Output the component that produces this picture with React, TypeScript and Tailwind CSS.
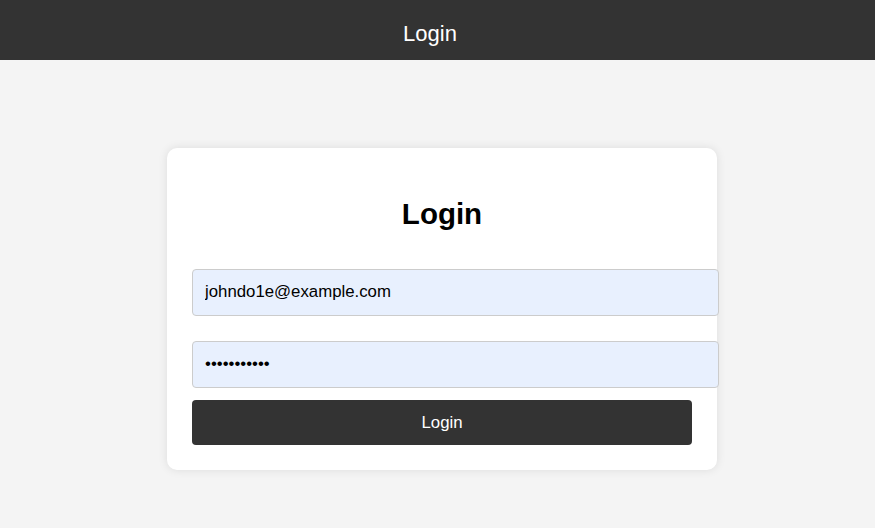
export default function App() {
  return (
    <div className="min-h-[528px] bg-[#f4f4f4] font-['Liberation_Sans',Arial,sans-serif]">
      <header className="flex h-[60px] items-center justify-center bg-[#333333] pr-[15px] pt-[6px] text-[22px] text-white">
        Login
      </header>
      <div className="ml-[167px] mt-[88px] w-[550px] rounded-[10px] bg-white p-[25px] shadow-[0_0_10px_rgba(0,0,0,0.1)]">
        <h2 className="mt-[25px] text-center text-[29.5px] font-bold leading-[32px] text-black">Login</h2>
        <form className="mt-[39px] flex flex-col" onSubmit={(e) => e.preventDefault()}>
          <input
            type="email"
            defaultValue="johndo1e@example.com"
            className="h-[47px] w-[527px] rounded-[4px] border border-[#cccccc] bg-[#e8f0fe] px-[12px] pb-[1px] text-[16.8px] text-black outline-none"
          />
          <input
            type="password"
            defaultValue="12345678901"
            className="mt-[25px] h-[47px] w-[527px] rounded-[4px] border border-[#cccccc] bg-[#e8f0fe] px-[12px] pb-[1px] text-[16.8px] text-black outline-none"
          />
          <button
            type="submit"
            className="mt-[12px] h-[45px] w-[500px] rounded-[4px] bg-[#333333] text-[16.8px] text-white"
          >
            Login
          </button>
        </form>
      </div>
    </div>
  )
}
